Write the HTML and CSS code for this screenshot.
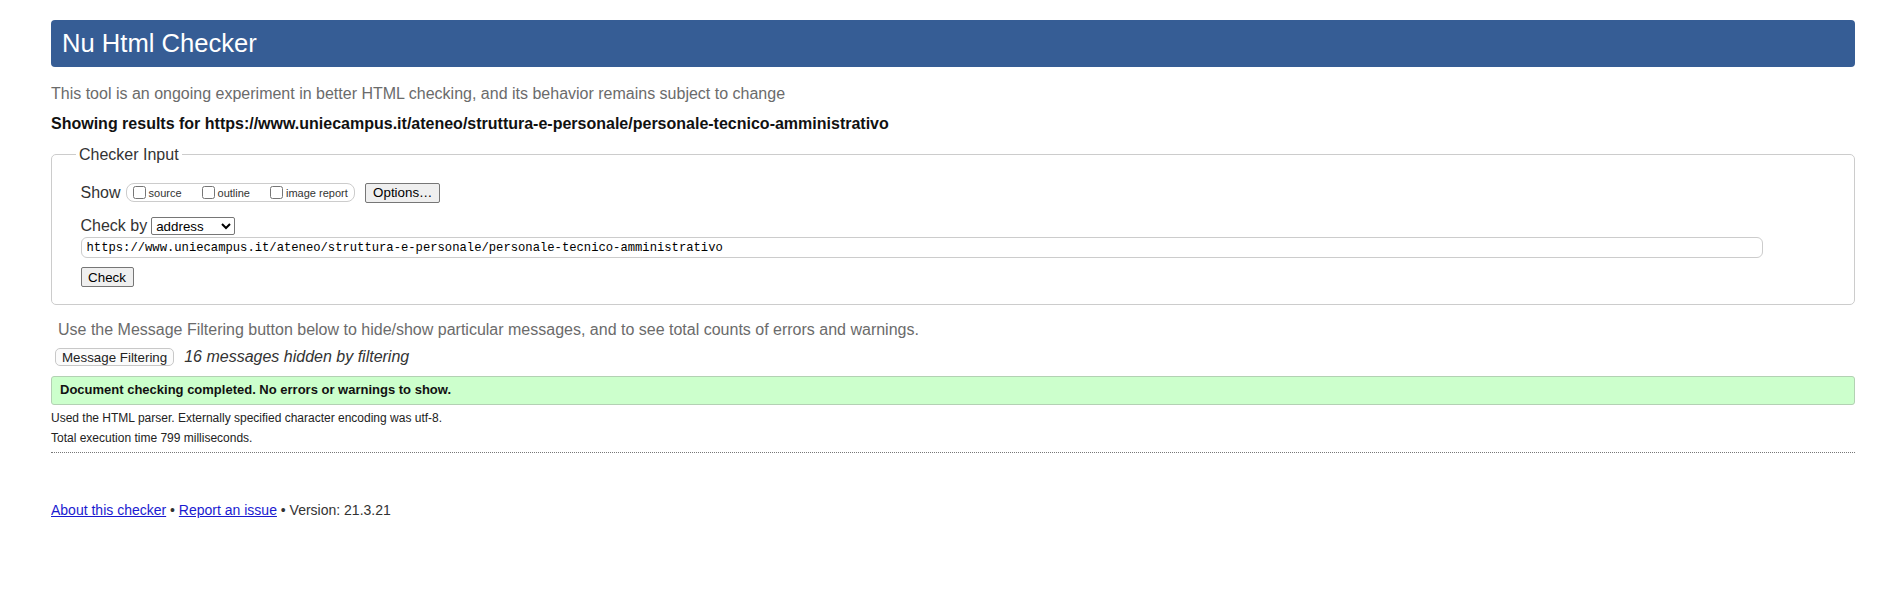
FILE: index.html
```html
<!DOCTYPE html>
<html lang="en">
<head>
<meta charset="utf-8">
<title>Nu Html Checker</title>
<link rel="stylesheet" href="styles.css">
</head>
<body>
<h1 class="title">Nu Html Checker</h1>
<p class="intro">This tool is an ongoing experiment in better HTML checking, and its behavior remains subject to change</p>
<p class="target">Showing results for https://www.uniecampus.it/ateneo/struttura-e-personale/personale-tecnico-amministrativo</p>
<form class="checker">
  <fieldset class="input-box">
    <legend class="legend">Checker Input</legend>
    <div class="row-show">
      <span class="label-lg">Show</span>
      <span class="show-box">
        <label class="opt"><input type="checkbox" class="cb">source</label>
        <label class="opt"><input type="checkbox" class="cb">outline</label>
        <label class="opt last"><input type="checkbox" class="cb">image report</label>
      </span>
      <button type="button" class="btn btn-options">Options…</button>
    </div>
    <div class="row-by">
      <span class="label-lg">Check by</span>
      <select class="sel"><option>address</option><option>file upload</option><option>text input</option></select>
    </div>
    <input class="url" type="text" value="https://www.uniecampus.it/ateneo/struttura-e-personale/personale-tecnico-amministrativo">
    <button type="button" class="btn btn-check">Check</button>
  </fieldset>
</form>
<p class="notice">Use the Message Filtering button below to hide/show particular messages, and to see total counts of errors and warnings.</p>
<div class="filter-row">
  <button type="button" class="btn-filter">Message Filtering</button>
  <span class="hidden-count">16 messages hidden by filtering</span>
</div>
<div class="success">Document checking completed. No errors or warnings to show.</div>
<p class="meta first">Used the HTML parser. Externally specified character encoding was utf-8.</p>
<p class="meta">Total execution time 799 milliseconds.</p>
<div class="rule"></div>
<p class="footer"><a href="#" class="link">About this checker</a> • <a href="#" class="link">Report an issue</a> • Version: 21.3.21</p>
</body>
</html>
```
FILE: styles.css
```css
html { background: #fff; }
body {
  margin: 20px 45px 0 51px;
  font-family: "Liberation Sans", Arial, sans-serif;
  color: #222;
}
.title {
  margin: 0;
  height: 47px;
  line-height: 46px;
  padding: 0 11px;
  background: #365d95;
  color: #fff;
  font-size: 25.6px;
  font-weight: normal;
  border-radius: 4px;
}
.intro {
  margin: 16.5px 0 0;
  font-size: 16px;
  line-height: 20px;
  color: #6b6b6b;
}
.target {
  margin: 10px 0 0;
  font-size: 16px;
  line-height: 20px;
  font-weight: bold;
  color: #111;
}
.checker { margin: 0; }
.input-box {
  margin: 12px 0 0;
  padding: 19px 28.5px 17px;
  border: 1px solid #ccc;
  border-radius: 5px;
  min-width: 0;
}
.legend {
  font-size: 16px;
  line-height: 18px;
  padding: 0 3px;
  margin-left: -4.5px;
  color: #333;
}
.label-lg {
  font-size: 16px;
  line-height: 16px;
  color: #333;
}
.row-show {
  display: flex;
  align-items: center;
  height: 20px;
}
.show-box {
  display: flex;
  align-items: center;
  height: 19px;
  box-sizing: border-box;
  margin-left: 5px;
  padding: 0 6px 0 2px;
  border: 1px solid #ccc;
  border-radius: 8px;
}
.opt {
  display: flex;
  align-items: center;
  font-size: 11px;
  color: #333;
  margin-right: 16px;
}
.opt.last { margin-right: 0; }
.cb {
  width: 13px;
  height: 13px;
  margin: 0 3px 0 4px;
}
.btn {
  font-family: "Liberation Sans", Arial, sans-serif;
  font-size: 13.33px;
  color: #000;
  height: 20px;
  padding: 0 6px;
  border: 1px solid #767676;
  border-radius: 2px;
  background: #efefef;
}
.btn-options { margin-left: 10.5px; width: 75px; }
.row-by {
  display: flex;
  align-items: baseline;
  gap: 4px;
  margin-top: 14px;
  height: 18px;
}
.sel {
  width: 84px;
  height: 18px;
  font-family: "Liberation Sans", Arial, sans-serif;
  font-size: 13.33px;
  color: #000;
  background: #fff;
  border: 1px solid #767676;
  border-radius: 2px;
  padding: 0;
}
.url {
  display: block;
  box-sizing: border-box;
  width: calc(100% - 63px);
  height: 21px;
  margin: 2.5px 0 0;
  padding: 0 5px;
  border: 1px solid #ccc;
  border-radius: 6px;
  font-family: "Liberation Mono", "DejaVu Sans Mono", monospace;
  font-size: 12.2px;
  color: #000;
}
.btn-check { display: block; margin-top: 9px; width: 53px; }
.notice {
  margin: 15.2px 0 0 7px;
  font-size: 16px;
  line-height: 20px;
  color: #6b6b6b;
}
.filter-row {
  display: flex;
  align-items: baseline;
  gap: 10px;
  margin: 7.4px 0 0 4px;
}
.btn-filter {
  font-family: "Liberation Sans", Arial, sans-serif;
  font-size: 13.33px;
  color: #222;
  height: 18px;
  padding: 0 6px;
  border: 1px solid #c8c8c8;
  border-radius: 5px;
  background: #fbfbfb;
}
.hidden-count {
  font-size: 16px;
  line-height: 18px;
  font-style: italic;
  color: #333;
}
.success {
  margin-top: 10px;
  padding: 5px 8px 6px;
  line-height: 16px;
  font-size: 13px;
  font-weight: bold;
  color: #111;
  background: #ccffcc;
  border: 1px solid #b3d1b3;
  border-radius: 3px;
}
.meta {
  margin: 0;
  font-size: 12px;
  line-height: 20px;
  color: #222;
}
.meta.first { margin-top: 3px; }
.rule {
  margin-top: 4px;
  border-top: 1px dotted #777;
}
.footer {
  margin: 47px 0 0;
  font-size: 14px;
  line-height: 20px;
  color: #333;
}
.link { color: #1a1ad0; text-decoration: underline; }
```
